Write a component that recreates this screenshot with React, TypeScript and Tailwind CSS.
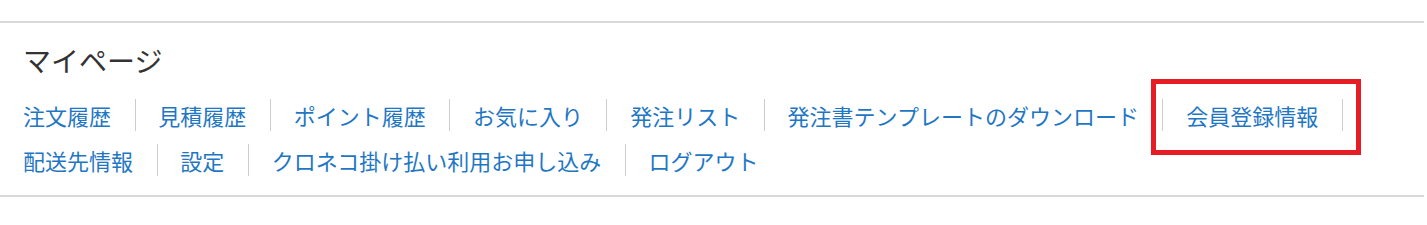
import React from 'react';

const rowLinks: string[] = [
  '注文履歴',
  '見積履歴',
  'ポイント履歴',
  'お気に入り',
  '発注リスト',
  '発注書テンプレートのダウンロード',
  '会員登録情報',
  '配送先情報',
  '設定',
  'クロネコ掛け払い利用お申し込み',
  'ログアウト',
];

const HIGHLIGHT = '会員登録情報';

const App: React.FC = () => {
  return (
    <div className="w-full bg-white pt-[21px]" style={{ fontFamily: '"Noto Sans CJK JP", "Noto Sans", sans-serif' }}>
      <section className="w-[1424px] border-y-2 border-[#d8d8d8] pl-[23px] pt-[16px] pb-[19px]">
        <h2 className="h-[42px] text-[28px] leading-[42px] font-normal text-[#333333]">マイページ</h2>
        <ul className="mt-[18px] flex flex-wrap gap-y-[13px]">
          {rowLinks.map((label, i) => {
            const isLast = i === rowLinks.length - 1;
            return (
              <li
                key={label}
                className={`relative h-[32px] text-[22px] leading-[32px] ${isLast ? '' : 'mr-[22.8px] pr-[23.5px] border-r border-[#cccccc]'}`}
              >
                <a href="#" className="text-[#1f77c4] whitespace-nowrap">
                  {label}
                </a>
                {/* 注目枠 */}
                {label === HIGHLIGHT && (
                  <span className="pointer-events-none absolute -left-[35px] -right-[19px] -top-[20px] -bottom-[24px] border-[5px] border-[#e81c25]" />
                )}
              </li>
            );
          })}
        </ul>
      </section>
    </div>
  );
};

export default App;
